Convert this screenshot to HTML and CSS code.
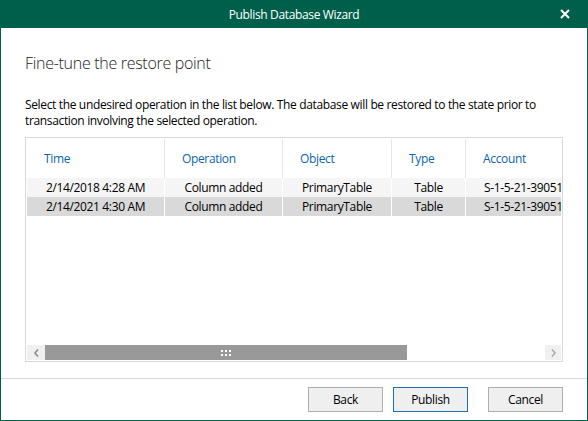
FILE: index.html
```html
<!DOCTYPE html>
<html lang="en">
<head>
<meta charset="utf-8">
<title>Publish Database Wizard</title>
<link rel="stylesheet" href="styles.css">
</head>
<body>
<div class="window">
  <header class="titlebar">
    <span class="spacer-l"></span>
    <h1 class="title">Publish Database Wizard</h1>
    <button class="close" aria-label="Close">
      <svg width="10" height="10" viewBox="0 0 10 10"><path d="M1 1 L9 9 M9 1 L1 9" stroke="#fff" stroke-width="2" fill="none"/></svg>
    </button>
  </header>
  <main class="content">
    <h2 class="heading">Fine-tune the restore point</h2>
    <p class="desc">Select the undesired operation in the list below. The database will be restored to the state prior to transaction involving the selected operation.</p>
    <div class="list">
      <div class="list-head">
        <div class="col c1">Time</div>
        <div class="col c2">Operation</div>
        <div class="col c3">Object</div>
        <div class="col c4">Type</div>
        <div class="col c5">Account</div>
      </div>
      <div class="row">
        <div class="cell c1">2/14/2018 4:28 AM</div>
        <div class="cell c2">Column added</div>
        <div class="cell c3">PrimaryTable</div>
        <div class="cell c4">Table</div>
        <div class="cell c5">S-1-5-21-3905119848-2310512713</div>
      </div>
      <div class="row selected">
        <div class="cell c1">2/14/2021 4:30 AM</div>
        <div class="cell c2">Column added</div>
        <div class="cell c3">PrimaryTable</div>
        <div class="cell c4">Table</div>
        <div class="cell c5">S-1-5-21-3905119848-2310512713</div>
      </div>
      <div class="list-fill"></div>
      <div class="hscroll">
        <div class="arrow arrow-left">
          <svg width="5" height="8" viewBox="0 0 5 8"><path d="M4 0.5 L1 4 L4 7.5" stroke="#8a8a8a" stroke-width="1.6" fill="none"/></svg>
        </div>
        <div class="thumb">
          <svg width="10" height="6" viewBox="0 0 10 6"><rect x="0" y="0" width="2" height="2" fill="#fff"/><rect x="4" y="0" width="2" height="2" fill="#fff"/><rect x="8" y="0" width="2" height="2" fill="#fff"/><rect x="0" y="4" width="2" height="2" fill="#fff"/><rect x="4" y="4" width="2" height="2" fill="#fff"/><rect x="8" y="4" width="2" height="2" fill="#fff"/></svg>
        </div>
        <div class="track"></div>
        <div class="arrow arrow-right">
          <svg width="5" height="8" viewBox="0 0 5 8"><path d="M1 0.5 L4 4 L1 7.5" stroke="#ababab" stroke-width="1.6" fill="none"/></svg>
        </div>
      </div>
    </div>
  </main>
  <footer class="footer">
    <button class="btn">Back</button>
    <button class="btn primary">Publish</button>
    <button class="btn cancel">Cancel</button>
  </footer>
</div>
</body>
</html>
```
FILE: styles.css
```css
html, body {
  margin: 0;
  padding: 0;
  background: #fff;
}

body {
  font-family: "Open Sans", "Noto Sans", sans-serif;
  font-size: 12px;
  letter-spacing: -0.35px;
  color: #000;
}

.window {
  width: 588px;
  height: 421px;
  box-sizing: border-box;
  border: 1px solid #005f4b;
  border-top: 0;
  display: flex;
  flex-direction: column;
  background: #fff;
}

.titlebar {
  height: 28px;
  flex: none;
  background: #005f4b;
  display: grid;
  grid-template-columns: 1fr auto 1fr;
  align-items: center;
  color: #fff;
}

.title {
  margin: 0;
  padding-top: 2px;
  font-size: 12px;
  font-weight: 400;
  line-height: 16px;
}

.close {
  justify-self: end;
  margin-right: 17px;
  padding: 0;
  border: 0;
  background: none;
  width: 10px;
  height: 10px;
  display: flex;
}

.content {
  flex: 1;
  padding: 0 24px;
  display: flex;
  flex-direction: column;
}

.heading {
  margin: 25px 0 0;
  font-size: 16px;
  font-weight: 300;
  line-height: 20px;
  letter-spacing: -0.3px;
  color: #222;
}

.desc {
  margin: 24px 0 0;
  font-size: 12px;
  line-height: 16px;
  color: #000;
}

.list {
  margin-top: 8px;
  height: 225px;
  box-sizing: border-box;
  border: 1px solid #d9d9d9;
  padding: 1px;
  display: flex;
  flex-direction: column;
  overflow: hidden;
}

.list-head,
.row {
  display: flex;
  overflow: hidden;
  flex: none;
}

.list-head {
  height: 39px;
}

.row {
  height: 19px;
  background: #f5f5f5;
}

.row.selected {
  background: #d9d9d9;
}

.col,
.cell {
  flex: none;
  box-sizing: border-box;
  white-space: nowrap;
  overflow: hidden;
}

.c1 { width: 138px; }
.c2 { width: 118px; }
.c3 { width: 109px; }
.c4 { width: 74px; }
.c5 { width: 220px; }

.col {
  border-right: 1px solid #e6e6e6;
  padding-left: 17px;
  color: #0a64ad;
  display: flex;
  align-items: center;
}

.cell {
  border-right: 1px solid #fff;
  text-align: center;
  line-height: 19px;
}

.cell.c5 {
  text-align: left;
  padding-left: 18px;
}

.list-fill {
  flex: 1;
}

.hscroll {
  flex: none;
  height: 15px;
  display: flex;
}

.arrow {
  flex: none;
  background: #f0f0f0;
  display: flex;
  align-items: center;
  justify-content: center;
}

.arrow-left { width: 18px; }
.arrow-right { width: 16px; }

.thumb {
  flex: none;
  width: 362px;
  background: #999;
  display: flex;
  align-items: center;
  justify-content: center;
}

.track {
  flex: 1;
  background: #fff;
}

.footer {
  flex: none;
  height: 42px;
  box-sizing: border-box;
  border-top: 1px solid #d9d9d9;
  padding: 8px 24px 0 0;
  display: flex;
  justify-content: flex-end;
  align-items: flex-start;
  gap: 10px;
}

.btn {
  width: 75px;
  height: 25px;
  box-sizing: border-box;
  border: 1px solid #adadad;
  background: #efefef;
  font-family: inherit;
  font-size: 12px;
  letter-spacing: -0.35px;
  color: #000;
  padding: 0;
  border-radius: 0;
}

.btn.primary {
  border-color: #1c6eb0;
}

.btn.cancel {
  margin-left: 10px;
}
```
